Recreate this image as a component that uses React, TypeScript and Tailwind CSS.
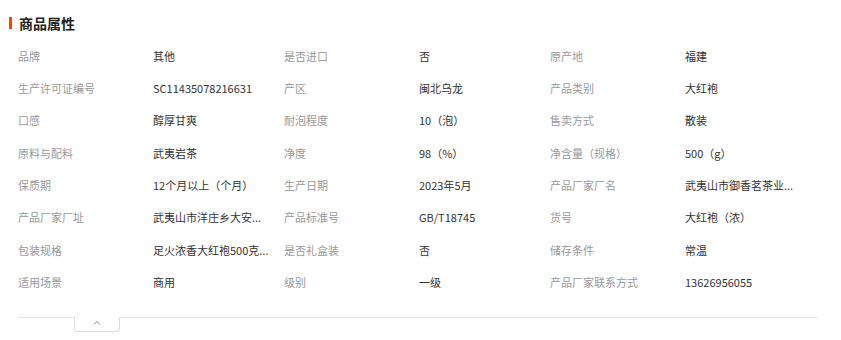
const rows: [string, string][][] = [
  [["品牌", "其他"], ["是否进口", "否"], ["原产地", "福建"]],
  [["生产许可证编号", "SC11435078216631"], ["产区", "闽北乌龙"], ["产品类别", "大红袍"]],
  [["口感", "醇厚甘爽"], ["耐泡程度", "10（泡）"], ["售卖方式", "散装"]],
  [["原料与配料", "武夷岩茶"], ["净度", "98（%）"], ["净含量（规格）", "500（g）"]],
  [["保质期", "12个月以上（个月）"], ["生产日期", "2023年5月"], ["产品厂家厂名", "武夷山市御香茗茶业..."]],
  [["产品厂家厂址", "武夷山市洋庄乡大安..."], ["产品标准号", "GB/T18745"], ["货号", "大红袍（浓）"]],
  [["包装规格", "足火浓香大红袍500克..."], ["是否礼盒装", "否"], ["储存条件", "常温"]],
  [["适用场景", "商用"], ["级别", "一级"], ["产品厂家联系方式", "13626956055"]],
];

function AttrRow({ cells }: { cells: [string, string][] }) {
  return (
    <div className="grid h-[32.3px] grid-cols-[135px_131px_135px_131px_135px_131px] items-center">
      {cells.map(([label, value]) => (
        <>
          <div key={label} className="whitespace-nowrap text-[#999999]">
            {label}
          </div>
          <div key={label + "-v"} className="whitespace-nowrap text-[#333333]">
            {value}
          </div>
        </>
      ))}
    </div>
  );
}

export default function App() {
  return (
    <div
      className="h-[340px] w-[841px] bg-white"
      style={{ fontFamily: '"Noto Sans CJK SC", "Liberation Sans", sans-serif' }}
    >
      <div className="flex h-[40px] items-center gap-[7px] pl-[9px] pt-[6px]">
        <span className="h-[12px] w-[3px] bg-[#ff4400]" />
        <h2 className="text-[14px] font-bold text-[#222222]">商品属性</h2>
      </div>

      <div className="pl-[18px] text-[11px]">
        {rows.map((cells, i) => (
          <AttrRow key={i} cells={cells} />
        ))}
      </div>

      <div className="ml-[18px] mt-[19px] w-[799px] border-t border-[#e5e5e5]">
        <div className="-mt-px ml-[56px] flex h-[15px] w-[46px] justify-center rounded-b-[4px] border border-t-0 border-[#dddddd] bg-white pt-[3px]">
          <svg width="8" height="5" viewBox="0 0 8 5" fill="none">
            <path d="M1 4.5L4 1.2L7 4.5" stroke="#8a94a6" strokeWidth="1" />
          </svg>
        </div>
      </div>
    </div>
  );
}
